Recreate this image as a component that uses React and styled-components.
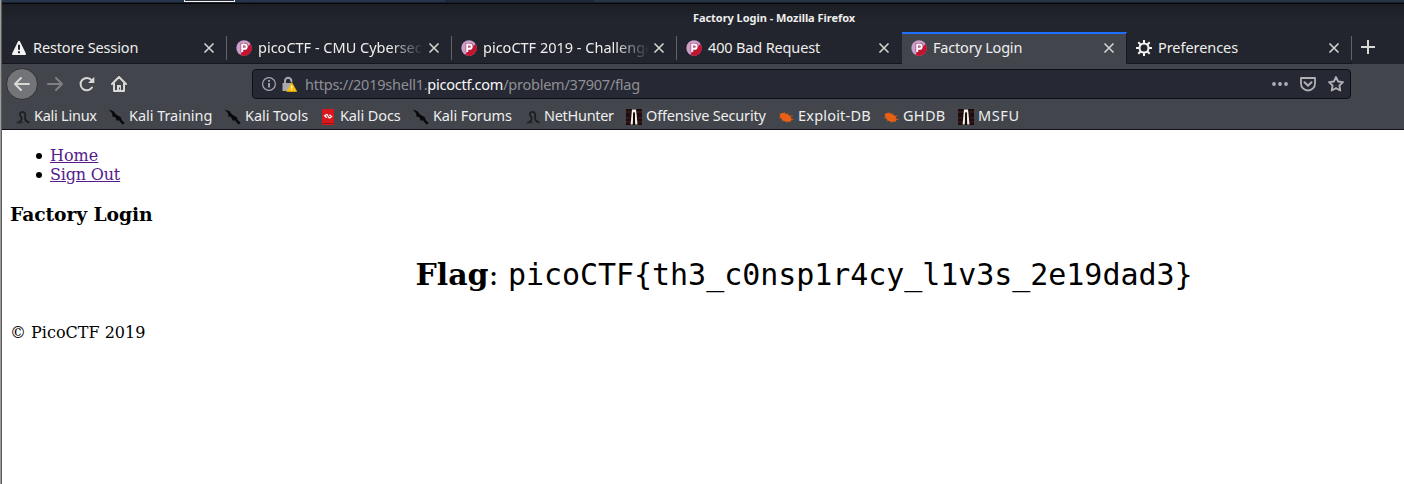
import React from "react";
import styled, { createGlobalStyle } from "styled-components";

const Global = createGlobalStyle`
  * { box-sizing: border-box; }
  body { margin: 0; background: #fff; overflow: hidden; }
`;
const Window = styled.div`
  width: 1404px; height: 484px; display: flex; background: #fff;
`;
const Edge = styled.div`
  width: 2px; flex: none; background: linear-gradient(90deg, #9b9b9b 50%, #5d5d5d 50%);
`;
const Frame = styled.div`
  flex: 1; min-width: 0; display: flex; flex-direction: column;
  font-family: "Noto Sans", sans-serif; font-size: 14.5px; color: #eeeeec;
`;
const Desktop = styled.div`
  height: 3px; display: flex; background: linear-gradient(90deg, #26344c 0 443px, #1c2839 443px 592px, #263446 592px);
  border-bottom: 1px solid #1a202a;
`;
const Taskbar = styled.div`
  width: 51px; height: 2px; margin-left: 182px; background: #2c303c;
  border: 1px solid #f4f4f4; border-top: 0;
`;
const TitleBar = styled.div`
  height: 29px; border-top: 1px solid #06070a; background: linear-gradient(#1b1e24, #23252e 17px);
  display: flex; align-items: center; justify-content: center;
`;
const Title = styled.div`
  margin-left: 142px; font-size: 11px; font-weight: 700; line-height: 16px; letter-spacing: -0.04px; white-space: nowrap;
`;
const TabStrip = styled.div`
  height: 32px; display: flex; background: #23252e;
`;
const Tab = styled.div`
  width: 225px; flex: none; display: flex; align-items: center; padding: 0 12px 1px 9px;
  border-top: 2px solid ${(p) => (p.$active ? "#1f6fff" : "transparent")};
  border-bottom: 1px solid ${(p) => (p.$active ? "#42454c" : "#15171d")};
  ${(p) => p.$active && "border-right: 1px solid #15171d; padding-right: 11px;"}
  background: ${(p) => (p.$active ? "#42454c" : "#23252e")};
`;
const TabText = styled.div`
  flex: 1; min-width: 0; height: 24px; margin: 0 4px 0 6px; white-space: nowrap;
  line-height: 23px; letter-spacing: ${(p) => p.$s || 0}px;
  ${(p) => p.$fade && "mask-image: linear-gradient(90deg, #000 calc(100% - 34px), transparent);"}
`;
const Divider = styled.div`
  width: 1px; height: 24px; margin: 4px 0 0 -1px; background: #62646a; flex: none;
`;
const NewTab = styled.div`
  padding: 7px 0 0 8px;
`;
const NavBar = styled.div`
  height: 39px; display: flex; align-items: center; background: #42454c; padding: 1px 0 0 4px;
`;
const BackButton = styled.div`
  width: 32px; height: 32px; margin-right: 1px; border-radius: 50%; background: #727478; border: 1px solid #2e3036;
  display: flex; align-items: center; justify-content: center;
`;
const NavIcon = styled.div`
  width: 32px; display: flex; justify-content: center; opacity: ${(p) => (p.$dim ? 0.4 : 1)};
`;
const UrlBar = styled.div`
  width: 1099px; height: 30px; margin-left: 117px; border: 1px solid #0d0e12; border-radius: 4px;
  background: #262833; display: flex; align-items: center; padding: 0 6px 0 8px;
`;
const Url = styled.div`
  flex: 1; margin-left: 8px; color: #8f9095; line-height: 24px; letter-spacing: -0.24px;
`;
const Host = styled.span`
  color: #f8f8f8;
`;
const UrlActions = styled.div`
  display: flex; gap: 12px; align-items: center;
`;
const Bookmarks = styled.div`
  height: 27px; display: flex; align-items: center; background: #42454c;
  border-bottom: 1px solid #101116; padding: 2px 0 0 12px;
`;
const Bookmark = styled.div`
  width: ${(p) => p.$w}px; height: 24px; flex: none; display: flex; align-items: center; gap: 4px;
`;
const BookmarkLabel = styled.span`
  white-space: nowrap; line-height: 20px; margin-bottom: 4px; letter-spacing: ${(p) => p.$s}px;
`;
const Page = styled.main`
  padding: 16px 8px; color: #000; font: 16px/19px "DejaVu Serif", serif;
`;
const Links = styled.ul`
  margin: 0; padding-left: 26px; list-style: none;
`;
const LinkItem = styled.li`
  display: flex; align-items: center; gap: 8px; letter-spacing: ${(p) => p.$s}px;
  &::before { content: ""; width: 6px; height: 6px; margin-top: 1px; border-radius: 50%; background: #000; }
`;
const PageLink = styled.a`
  color: #551a8b; text-decoration: underline;
`;
const Heading = styled.h3`
  margin: 19px 0 0; font-size: 18.72px; line-height: 22px; letter-spacing: -0.08px;
`;
const Flag = styled.p`
  margin: 32px 0 30px; text-align: center; font-size: 30px; line-height: 36px; padding-left: 202px; letter-spacing: -0.05px;
`;
const Code = styled.code`
  font-family: "DejaVu Sans Mono", monospace; font-size: 30px;
`;
const Footer = styled.footer``;

const Svg = ({ s = 16, children, ...r }) => (
  <svg width={s} height={s} viewBox="0 0 16 16" fill="none" style={{ flex: "none" }} {...r}>{children}</svg>
);
const Stroke = { stroke: "#d8d8d5", strokeWidth: 2, strokeLinecap: "round", strokeLinejoin: "round" };
const Close = () => (
  <Svg s={12} viewBox="0 0 12 12"><path d="M1.5 1.5l9 9m0-9l-9 9" stroke="#d3d4d0" strokeWidth="1.6" /></Svg>
);
const Warning = () => (
  <Svg><path d="M8 1.800L14 14H2Z" fill="#f3f3f1" stroke="#f3f3f1" strokeWidth="2" strokeLinejoin="round" /><path d="M8 4.800v5M8 11.300v1.900" stroke="#23252e" strokeWidth="2" /></Svg>
);
const Pico = () => (
  <Svg>
    <circle cx="8" cy="8" r="7.700" fill="#c9a0cb" />
    <path d="M14.600 4A7.700 7.700 0 0 1 4.400 14.800L6.200 11.800 11.300 7Z" fill="#c4122f" />
    <path d="M6.300 12.200V4.600h2.300a2.200 2.200 0 0 1 0 4.400H6.500" stroke="#a3214a" strokeWidth="3.200" />
    <path d="M6.200 12V4.600h2.400a2.100 2.100 0 0 1 0 4.200H6.400" stroke="#fff" strokeWidth="2" />
  </Svg>
);
const Gear = () => (
  <Svg><circle cx="8" cy="8" r="4.500" stroke="#f2f2f0" strokeWidth="2" />
    <path d="M8 0v3M8 13v3M0 8h3M13 8h3M2.300 2.300l2.200 2.200M11.500 11.500l2.200 2.200M13.700 2.300l-2.200 2.200M4.500 11.500l-2.200 2.200" stroke="#f2f2f0" strokeWidth="2" /></Svg>
);
const Dragon = () => (
  <Svg>
    <path d="M3.500 13.600C6.500 12.600 8.300 11 7.600 9 7 7.300 5.200 6.200 6 4.300 7 2.300 10 2.200 11 4.600c.8 2-.3 3.800.2 5.600.4 1.600 2 2.600 4.300 3.600" stroke="#1c1d20" strokeWidth="1.700" />
    <path d="M1.500 14.200L5 12.500l5 1.100-3 1z" fill="#25272b" />
  </Svg>
);
const Blade = () => (
  <Svg><path d="M-.300 .300L4.500 2.300 7 5.400 11.800 8.300 12.800 11.200 15.800 14 13.500 15.600 9.800 11.300 7.800 11.700 6 8.100 3.400 7.600 3.200 4.400Z" fill="#08090b" /></Svg>
);
const Docs = () => (
  <Svg><path d="M3 0h11v16H3a1 1 0 0 1-1-1V1a1 1 0 0 1 1-1z" fill="#d8171c" /><path d="M2.500 14.500h11.500" stroke="#8e1418" />
    <path d="M6.800 5.200L4.600 6.800 6.900 8.700M9.300 5.800L11.600 7.500 9.400 9.300M7 5.200l2.200 4" stroke="#fff" strokeWidth="1.200" /></Svg>
);
const Offsec = () => (
  <Svg><path d="M0 0h16v16H0z" fill="#1d0c0d" /><path d="M0 3h5M11 3h5M0 9h4M12 9h4M0 13h4M12 13h4" stroke="#4a2422" strokeWidth="1.200" />
    <path d="M6 .500h4l.6 5 .9 10H9L8.800 3.500H7.300L6.800 15.500H4.600l.9-10z" fill="#f5eee9" /><path d="M7.400 3.500h1.300l.5 12.500H6.900z" fill="#100809" /></Svg>
);
const Bug = () => (
  <Svg><path d="M2 5C3.500 3.300 7.500 3.800 10.300 5.800l2.500 1.500.2 2 .9 1-1.200 2.100c-3 1-6.400.3-8.600-1.700C2.400 9 1.300 6.500 2 5z" fill="#e95f13" />
    <path d="M6 4.500L6.500 2.800M9 5.200l1.500-1.500M3 8.500L1 9M5 11l-.8 1.500M11.500 7.500l3.200-.8M12.500 10l3.200.5M8 12l.3 1.700" stroke="#d05c1c" strokeWidth=".8" /></Svg>
);
const icons = { warning: Warning, pico: Pico, gear: Gear, dragon: Dragon, blade: Blade, docs: Docs, offsec: Offsec, bug: Bug };
const Icon = ({ name }) => { const I = icons[name]; return <I />; };

const tabs = [
  ["warning", "Restore Session", -0.14],
  ["pico", "picoCTF - CMU Cybersec", 0],
  ["pico", "picoCTF 2019 - Challenge", 0],
  ["pico", "400 Bad Request", -0.15],
  ["pico", "Factory Login", -0.2],
  ["gear", "Preferences", -0.06],
];
const marks = [
  ["dragon", "Kali Linux", 95, -0.25], ["blade", "Kali Training", 116, -0.04], ["blade", "Kali Tools", 95, -0.06],
  ["docs", "Kali Docs", 93, -0.12], ["blade", "Kali Forums", 111, -0.12], ["dragon", "NetHunter", 102, -0.3],
  ["offsec", "Offensive Security", 152, -0.17], ["bug", "Exploit-DB", 105, 0.2], ["bug", "GHDB", 75, 0.3], ["offsec", "MSFU", 80, 0.6],
];

export default function App() {
  return (
    <Window>
      <Global />
      <Edge />
      <Frame>
        <Desktop><Taskbar /></Desktop>
        <TitleBar><Title>Factory Login - Mozilla Firefox</Title></TitleBar>
        <TabStrip>
          {tabs.map(([icon, text, spacing], i) => (
            <React.Fragment key={i}>
              <Tab $active={i === 4}>
                <Icon name={icon} />
                <TabText $s={spacing} $fade={i === 1 || i === 2}>{text}</TabText>
                <Close />
              </Tab>
              {i !== 3 && i !== 4 && <Divider />}
            </React.Fragment>
          ))}
          <NewTab><Svg><path d="M8 1v14M1 8h14" stroke="#d8d9d5" strokeWidth="2" /></Svg></NewTab>
        </TabStrip>
        <NavBar>
          <BackButton><Svg><path d="M15 8H1.500M7 2L1 8l6 6" {...Stroke} /></Svg></BackButton>
          <NavIcon $dim><Svg><path d="M1 8h13.500M9 2l6 6-6 6" {...Stroke} /></Svg></NavIcon>
          <NavIcon><Svg><path d="M13 11.500A6.200 6.200 0 1 1 12.600 4.200" {...Stroke} /><path d="M15.300.8v6.200H9z" fill="#d8d8d5" /></Svg></NavIcon>
          <NavIcon><Svg><path d="M1 8l7-7 7 7M3 7.500V15h10V7.500" {...Stroke} /><path d="M8 15V9" stroke="#d8d8d5" strokeWidth="4" /><path d="M8.500 13.500v-2" stroke="#42454c" /></Svg></NavIcon>
          <UrlBar>
            <Svg><circle cx="8" cy="8" r="6.400" stroke="#a8a9ac" strokeWidth="1.200" /><path d="M8 7v4.500M8 4v1.800" stroke="#a8a9ac" strokeWidth="1.800" /></Svg>
            <Svg style={{ flex: "none", marginLeft: 4 }}><path d="M4 8V5a3.200 3.200 0 0 1 6.400 0v1" stroke="#a8a9ac" strokeWidth="2" /><path d="M1.500 7h9v8h-9z" fill="#a8a9ac" /><path d="M10.800 6.500L15.800 15.500H5.800z" fill="#ffbf00" stroke="#ffbf00" strokeWidth=".6" strokeLinejoin="round" /><path d="M10.800 9.500v3M10.800 13.300v1.200" stroke="#fff" strokeWidth="1.300" /></Svg>
            <Url>https://2019shell1.<Host>picoctf.com</Host>/problem/37907/flag</Url>
            <UrlActions>
              <Svg><circle cx="2" cy="8" r="1.900" fill="#b1b1b3" /><circle cx="8" cy="8" r="1.900" fill="#b1b1b3" /><circle cx="14" cy="8" r="1.900" fill="#b1b1b3" /></Svg>
              <Svg><path d="M1 2h14v5.500a7 7 0 0 1-14 0z" stroke="#b1b1b3" strokeWidth="1.800" strokeLinejoin="round" /><path d="M4.500 6.200L8 9.600l3.500-3.400" stroke="#b1b1b3" strokeWidth="2" strokeLinecap="round" /></Svg>
              <Svg><path d="M8 1l2.100 4.500 4.900.6-3.600 3.400.9 5L8 12.100l-4.300 2.400.9-5L1 6.100l4.900-.6z" stroke="#b1b1b3" strokeWidth="1.800" strokeLinejoin="round" /></Svg>
            </UrlActions>
          </UrlBar>
        </NavBar>
        <Bookmarks>
          {marks.map(([icon, text, w, spacing], i) => <Bookmark key={i} $w={w}><Icon name={icon} /><BookmarkLabel $s={spacing}>{text}</BookmarkLabel></Bookmark>)}
        </Bookmarks>
        <Page>
          <Links><LinkItem $s={0}><PageLink>Home</PageLink></LinkItem><LinkItem $s={-0.18}><PageLink>Sign Out</PageLink></LinkItem></Links>
          <Heading>Factory Login</Heading>
          <Flag><b>Flag</b>: <Code>picoCTF&#123;th3_c0nsp1r4cy_l1v3s_2e19dad3&#125;</Code></Flag>
          <Footer>© PicoCTF 2019</Footer>
        </Page>
      </Frame>
    </Window>
  );
}
